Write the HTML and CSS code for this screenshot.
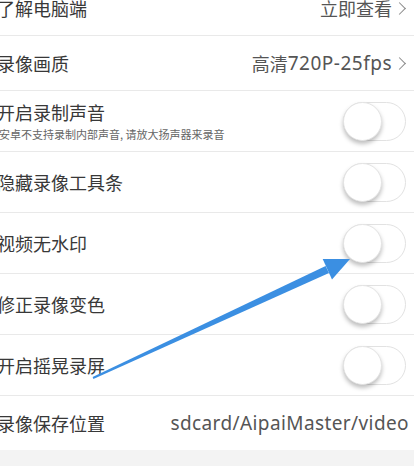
FILE: index.html
```html
<!DOCTYPE html>
<html lang="zh-CN">
  <head>
    <meta charset="UTF-8" />
    <meta name="viewport" content="width=device-width, initial-scale=1.0" />
    <title>录像设置</title>
    <link rel="stylesheet" href="styles.css">
  </head>
  <body>
    <div class="settings">
      <!-- 链接行 -->
      <div class="row row-short">
        <span class="label">了解电脑端</span>
        <span class="value">立即查看<i class="chevron"></i></span>
      </div>
      <div class="row row-short">
        <span class="label">录像画质</span>
        <span class="value">高清<span class="latin">720P-25fps</span><i class="chevron"></i></span>
      </div>

      <!-- 开关行 -->
      <div class="row">
        <div class="label-group">
          <span class="label">开启录制声音</span>
          <span class="hint">安卓不支持录制内部声音, 请放大扬声器来录音</span>
        </div>
        <span class="switch"><span class="knob"></span></span>
      </div>
      <div class="row">
        <span class="label">隐藏录像工具条</span>
        <span class="switch"><span class="knob"></span></span>
      </div>
      <div class="row">
        <span class="label">视频无水印</span>
        <span class="switch"><span class="knob"></span></span>
      </div>
      <div class="row">
        <span class="label">修正录像变色</span>
        <span class="switch"><span class="knob"></span></span>
      </div>
      <div class="row">
        <span class="label">开启摇晃录屏</span>
        <span class="switch"><span class="knob"></span></span>
      </div>
      <div class="row row-last">
        <span class="label">录像保存位置</span>
        <span class="value latin path">sdcard/AipaiMaster/video</span>
      </div>
      <div class="spacer"></div>
    </div>

    <!-- 标注箭头 -->
    <svg class="arrow" width="414" height="469" viewBox="0 0 414 469">
      <polygon fill="#3b8fe2" points="92.6,377.1 93.4,378.9 329,273.1 325.6,265.9" />
      <polygon fill="#3b8fe2" points="350,259 322.7,259 332,279.5" />
    </svg>
  </body>
</html>
```

FILE: styles.css
```css
* {
  box-sizing: border-box;
}
body {
  margin: 0;
  background-color: #ffffff;
  font-family: "Noto Sans CJK SC", "Noto Sans", sans-serif;
  color: #333333;
  overflow: hidden;
  height: 469px;
}
.settings {
  margin-top: -19px;
}
.row {
  display: flex;
  align-items: center;
  justify-content: space-between;
  height: 61px;
  padding: 0 8px 0 0;
  border-bottom: 1px solid #e9e9e9;
}
.row-short {
  height: 55px;
}
.row-last {
  height: 54px;
  border-bottom: none;
}
.label {
  margin-left: -3px;
  font-size: 18px;
  line-height: 22px;
  color: #383838;
}
.label-group {
  display: flex;
  flex-direction: column;
}
.hint {
  margin-left: -1px;
  margin-top: 4px;
  font-size: 11px;
  line-height: 14px;
  color: #666666;
}
.value {
  display: flex;
  align-items: center;
  font-size: 18px;
  line-height: 22px;
  color: #555555;
}
.latin {
  font-family: "Noto Sans", sans-serif;
  font-size: 19px;
  letter-spacing: 0.5px;
}
.value.path {
  letter-spacing: 0.4px;
  margin-right: -3px;
}
.chevron {
  display: inline-block;
  width: 9px;
  height: 9px;
  margin: 0 2px 0 3px;
  border-top: 1.5px solid #8a8a8a;
  border-right: 1.5px solid #8a8a8a;
  transform: rotate(45deg);
}
.switch {
  position: relative;
  width: 63px;
  height: 39px;
  border: 1px solid #e2e2e2;
  border-radius: 20px;
  background-color: #ffffff;
}
.knob {
  position: absolute;
  left: -1px;
  top: -1px;
  width: 39px;
  height: 39px;
  border-radius: 50%;
  background-color: #ffffff;
  border: 1px solid #e4e4e4;
  box-shadow: 0 3px 4px rgba(0, 0, 0, 0.25);
}
.spacer {
  height: 16px;
  background-color: #f3f3f3;
}
.arrow {
  position: absolute;
  left: 0;
  top: 0;
}
```
